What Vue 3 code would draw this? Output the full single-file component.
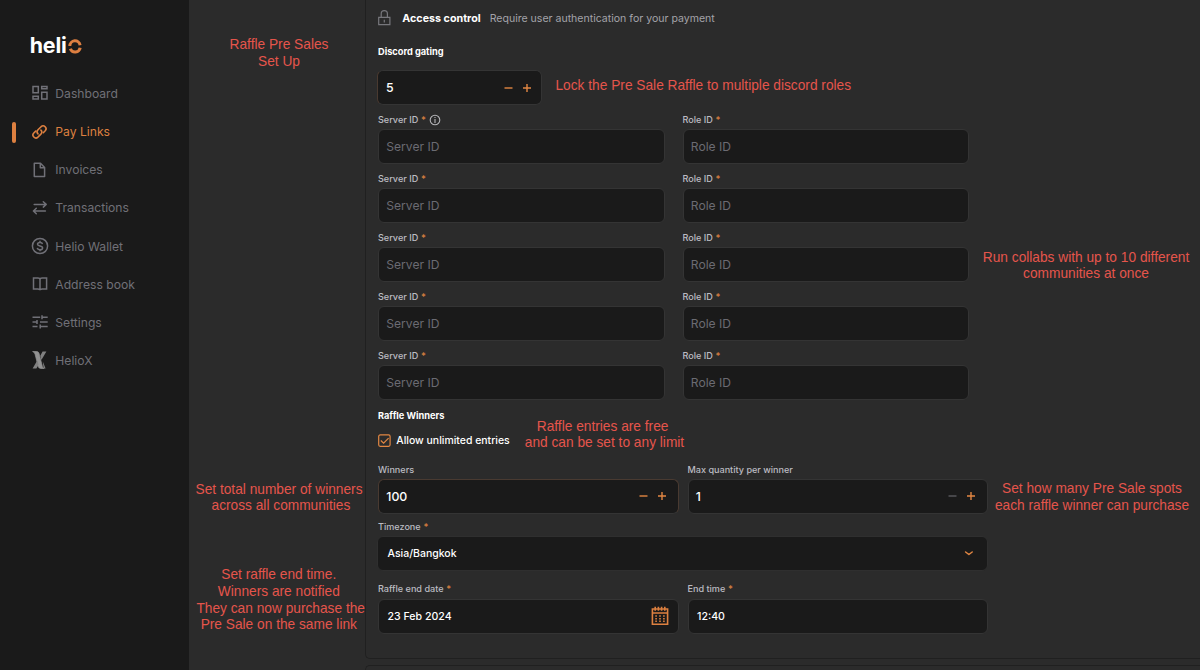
<script setup>
const nav = [
  { id: 'dashboard', label: 'Dashboard' },
  { id: 'links', label: 'Pay Links', active: true },
  { id: 'invoices', label: 'Invoices' },
  { id: 'transactions', label: 'Transactions' },
  { id: 'wallet', label: 'Helio Wallet' },
  { id: 'book', label: 'Address book' },
  { id: 'settings', label: 'Settings' },
  { id: 'heliox', label: 'HelioX' },
]
const notes = [
  { id: 'title', lines: ['Raffle Pre Sales', 'Set Up'] },
  { id: 'lock', lines: ['Lock the Pre Sale Raffle to multiple discord roles'] },
  { id: 'collabs', lines: ['Run collabs with up to 10 different', 'communities at once'] },
  { id: 'entries', lines: ['Raffle entries are free\u00a0', 'and can be set to any limit'] },
  { id: 'total', lines: ['Set total number of winners', '\u00a0across all communities'] },
  { id: 'spots', lines: ['Set how many Pre Sale spots', 'each raffle winner can purchase'] },
  { id: 'end', lines: ['Set raffle end time.', 'Winners are notified', '\u00a0They can now purchase the', 'Pre Sale on the same link'] },
]
</script>

<template>
  <div class="app">
    <aside class="sidebar">
      <div class="logo">
        <span>heli</span>
        <svg width="14" height="15" viewBox="0 0 14 15" fill="none" stroke="#dd7f41" stroke-width="3">
          <path d="M1.8 7A5.2 5.4 0 0 1 12.1 6.2" />
          <path d="M2.3 9.8A5.2 5.3 0 0 0 12.2 8.8" />
        </svg>
      </div>
      <nav>
        <a v-for="n in nav" :key="n.id" class="item" :class="{ active: n.active }">
          <svg width="18" height="18" viewBox="0 0 18 18" fill="none" stroke="currentColor" stroke-width="1.5">
            <g v-if="n.id === 'dashboard'">
              <path d="M2 2.5h5.3v6.3H2zM10.7 2.5H16v2.3h-5.3zM10.7 8.2H16v6.9h-5.3zM2 12.2h5.3v2.9H2z" />
            </g>
            <g v-else-if="n.id === 'links'" stroke-linecap="round" stroke-width="1.6">
              <path d="M7 10.9A2.9 2.9 0 0 1 7 6.8L10.1 3.7A2.9 2.9 0 0 1 14.2 7.8L12.3 9.7" />
              <path d="M9.9 7.1A2.9 2.9 0 0 1 9.9 11.1L6.9 14.1A2.9 2.9 0 0 1 2.8 10L4.7 8.1" />
            </g>
            <path v-else-if="n.id === 'invoices'" stroke-linejoin="round" d="M3.3 2.2h6.2l4.1 4.3v9H3.3zM9.3 2.5v4.2h4" />
            <g v-else-if="n.id === 'transactions'" stroke-linecap="round" stroke-linejoin="round">
              <path d="M3.2 5.4h12M12.3 2.8l2.9 2.6-2.9 2.7M14.4 12H2.4M5.3 9.3L2.4 12l2.9 2.7" />
            </g>
            <g v-else-if="n.id === 'wallet'">
              <circle cx="9" cy="9" r="7.6" />
              <path d="M9 3.8v1.6M9 12.7v1.6M11.5 7.1C11.3 5.9 10.3 5.4 9 5.4 7.5 5.4 6.5 6.1 6.5 7.2 6.5 9.7 11.6 8.2 11.6 10.9 11.6 12 10.6 12.7 9 12.7 7.5 12.7 6.5 12 6.3 10.9" />
            </g>
            <path v-else-if="n.id === 'book'" d="M2.5 3.1H7Q8.9 3.1 9 4.5 9.1 3.1 11 3.1H15.6V14H11Q9.2 14 9 15 8.8 14 7 14H2.5zM9 4.2v10.4" />
            <path v-else-if="n.id === 'settings'" d="M1.5 4.2h7.7M11 2.2v4M11 4.2h5.7M1.5 8.9h5M6 6.9v4M9 8.9h7.7M1.5 13.6h5M9.2 11.6v4M9.2 13.6h7.5" />
            <g v-else stroke="none">
              <path d="M1.6.5h4.2Q7.4.5 8 2.2L11.4 15.5q.4 1.5 1.7 2H9.9Q7.8 17.5 7.2 15.5L4 3Q3.4 1 1.6.5z" fill="#929292" stroke="#929292" stroke-width=".7" />
              <path d="M11.6.5h3.8L10.4 9.1 9.3 4.8zM6.4 9.2L7.6 13.8 5.4 17.5H1.6z" fill="#808080" />
              <path d="M11.8 10.5l2.8 7h-2z" fill="#808080" />
            </g>
          </svg>
          <span>{{ n.label }}</span>
        </a>
      </nav>
    </aside>

    <main>
      <section class="card">
        <header class="head">
          <svg width="14" height="18" viewBox="0 0 14 18" fill="none" stroke="#77777c" stroke-width="1.2">
            <path d="M.7 8.3h11.2v7.4H.7zM3.2 8.1V4.8a3.1 3.1 0 0 1 6.2 0v3.3M6.3 10.8v2.6" />
          </svg>
          <b>Access control</b>
          <span>Require user authentication for your payment</span>
        </header>
        <h3 class="gating">Discord gating</h3>
        <div class="field stepper count">
          <span>5</span>
          <svg class="pm" width="28" height="10" viewBox="0 0 28 10"><path d="M.5 5h8" /><path d="M19 5h8M23 1v8" /></svg>
        </div>
        <div class="roles">
          <div v-for="r in 5" :key="r" class="pair">
            <div>
              <label>Server ID <em>*</em>
                <svg v-if="r === 1" width="12" height="12" viewBox="0 0 12 12" fill="none" stroke="#b5b5b8" stroke-width="1.1">
                  <circle cx="6" cy="6" r="4.8" /><path d="M6 5v3.9M6 3v1.1" />
                </svg>
              </label>
              <div class="field placeholder">Server ID</div>
            </div>
            <div>
              <label>Role ID <em>*</em></label>
              <div class="field placeholder">Role ID</div>
            </div>
          </div>
        </div>
        <h3 class="winners">Raffle Winners</h3>
        <div class="check">
          <svg width="13" height="13" viewBox="0 0 13 13" fill="none" stroke="#e28743" stroke-width="1.2">
            <rect x=".7" y=".9" width="11.4" height="11.4" rx="1.5" />
            <path d="M2.8 6.5l2.8 2.7 5-5" />
          </svg>
          <span>Allow unlimited entries</span>
        </div>
        <div class="duo">
          <div>
            <label class="l-win">Winners</label>
            <div class="field stepper focus">
              <span>100</span>
              <svg class="pm" width="28" height="10" viewBox="0 0 28 10"><path d="M.5 5h8" /><path d="M19 5h8M23 1v8" /></svg>
            </div>
          </div>
          <div>
            <label class="l-win">Max quantity per winner</label>
            <div class="field stepper">
              <span>1</span>
              <svg class="pm" width="28" height="10" viewBox="0 0 28 10"><path class="off" d="M.5 5h8" /><path d="M19 5h8M23 1v8" /></svg>
            </div>
          </div>
        </div>
        <label class="l-zone">Timezone <em>*</em></label>
        <div class="field select">
          <span>Asia/Bangkok</span>
          <svg width="10" height="8" viewBox="0 0 10 8" fill="none" stroke="#e28743" stroke-width="1.5" stroke-linecap="round" stroke-linejoin="round"><path d="M1.6 3L4.9 5.5 8.2 3" /></svg>
        </div>
        <div class="duo">
          <div>
            <label class="l-date">Raffle end date <em>*</em></label>
            <div class="field date">
              <span>23 Feb 2024</span>
              <svg width="18" height="20" viewBox="0 0 18 20" fill="none" stroke="#dd8040" stroke-width="1.6">
                <path d="M1.4 3h15.2v15.2H1.4zM1 7h16M4.2.8v4M7.4.8v4M10.6.8v4M13.8.8v4" />
                <path d="M4.3 10h9.4M4.3 12.7h9.4M4.3 15.3h9.4" stroke-width="1.5" stroke-dasharray="1.6 2.3" />
              </svg>
            </div>
          </div>
          <div>
            <label class="l-date">End time <em>*</em></label>
            <div class="field date">12:40</div>
          </div>
        </div>
      </section>
      <section class="card next"></section>
    </main>

    <div v-for="n in notes" :key="n.id" class="note" :class="'note-' + n.id">
      <div v-for="l in n.lines" :key="l">{{ l }}</div>
    </div>
  </div>
</template>

<style>
body { margin: 0; background: #2b2b2b; overflow: hidden; }
</style>

<style scoped>
* { box-sizing: border-box; }
.app { position: relative; display: flex; width: 1200px; height: 670px; overflow: hidden; background: #2b2b2b; color: #fff; font-family: Inter, sans-serif; font-size: 10.5px; }
.sidebar { width: 189px; flex: none; background: #1a1a1a; }
.logo { display: flex; align-items: center; height: 74.4px; padding: 15px 0 0 29.7px; font-size: 21.4px; font-weight: 700; letter-spacing: -0.15px; }
.logo svg { margin: 4px 0 0 1px; }
.item { position: relative; display: flex; align-items: center; height: 38.15px; padding-left: 31px; gap: 6.3px; color: #707077; font-size: 12.15px; }
.item.active { color: #dd8040; }
.item.active::before { content: ''; position: absolute; left: 12px; top: 9.5px; width: 3.5px; height: 21px; border-radius: 2px; background: #dd8040; }
main { flex: 1; padding-left: 176px; }
.card { height: 658.5px; padding-left: 12px; border: 1px solid #202020; border-width: 0 0 1px 1px; border-radius: 0 0 0 5px; }
.card.next { height: 20px; margin-top: 6.5px; border-width: 1px 0 0 1px; border-radius: 5px 0 0 0; }
.head { display: flex; align-items: center; height: 36px; }
.head b { margin-left: 10.3px; font-size: 10.73px; }
.head span { margin-left: 9px; color: #a3a3a9; font-size: 10.55px; }
h3 { display: flex; align-items: center; margin: 0; font-size: 9.22px; font-weight: 700; }
.gating { height: 34px; padding-bottom: 3px; }
.winners { height: 28px; padding-top: 2px; }
label { display: flex; align-items: center; gap: 2.8px; height: 24.1px; padding-top: 5px; color: #bcbcc2; font-size: 9.08px; font-weight: 500; }
label em { color: #dd8040; font-style: normal; font-size: 9.5px; }
.l-win { height: 26px; padding-top: 8px; }
.l-zone { height: 22px; padding-top: 3px; }
.l-date { height: 28px; padding-top: 8px; }
.field { display: flex; align-items: center; height: 35px; padding: 0 7.3px; border: 1px solid #343434; border-radius: 6px; background: #1a1a1a; font-weight: 500; }
.placeholder { color: #6b6b72; font-size: 12.1px; font-weight: 400; }
.stepper { padding-right: 10.5px; font-size: 12.3px; }
.stepper span { flex: 1; }
.count { width: 165px; margin-left: -1px; padding: 0 9px 0 8px; border-left-color: #4a3a30; }
.focus { border-color: #493a31 #493a31 #343434 #493a31; }
.pm { fill: none; stroke: #e28743; stroke-width: 1.4; }
.pm .off { stroke: #5b5b5f; }
.roles { width: 591px; }
.pair { display: grid; grid-template-columns: 286.5px 286.5px; gap: 18px; }
.check { display: flex; align-items: center; height: 24.5px; gap: 5.3px; font-weight: 500; font-size: 10.46px; }
.duo { display: grid; grid-template-columns: 300.5px 300px; gap: 9px; }
.select { width: 611px; margin-left: -1px; padding: 0 13px 0 9.5px; justify-content: space-between; font-size: 10.5px; border-color: #2f2f2f; }
.date { justify-content: space-between; padding: 0 9px 0 8.5px; font-size: 10.6px; }
.note { position: absolute; color: #e5554b; font: 13.72px/16.6px "Liberation Sans", Arial, sans-serif; text-align: center; white-space: nowrap; transform: translateX(-50%); }
.note-title { left: 279px; top: 37px; }
.note-lock { left: 703.3px; top: 78px; }
.note-collabs { left: 1086px; top: 249.5px; }
.note-entries { left: 604.5px; top: 418.5px; }
.note-total { left: 279px; top: 481.7px; }
.note-spots { left: 1092px; top: 481px; }
.note-end { left: 278.8px; top: 567.4px; }
</style>
